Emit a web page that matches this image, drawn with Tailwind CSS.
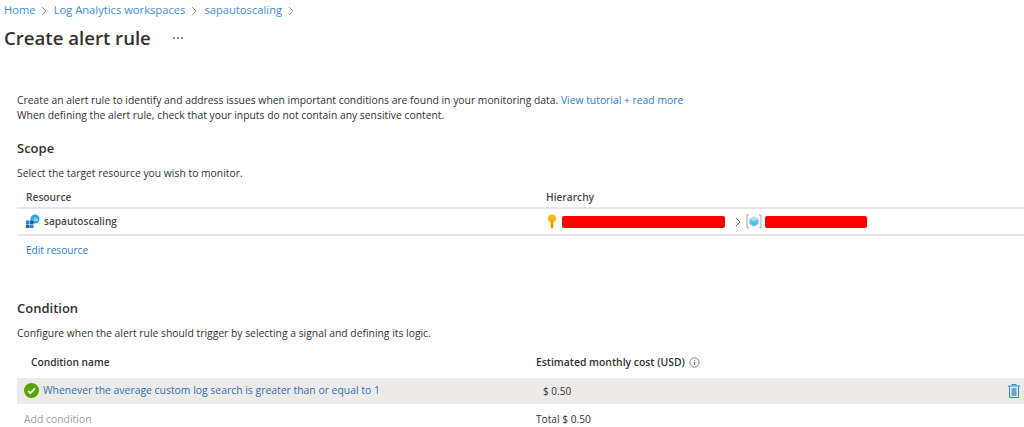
<!DOCTYPE html>
<html lang="en">
<head>
    <meta charset="UTF-8">
    <title>Create alert rule</title>
    <script src="https://cdn.jsdelivr.net/npm/@tailwindcss/browser@4"></script>
</head>
<body class="bg-white text-[#323130] font-['Open_Sans',sans-serif] text-[10.4px] w-[1024px] h-[427px] overflow-hidden">

    <!-- Breadcrumb -->
    <nav class="flex items-center h-[21px] pl-[4px] text-[11.2px] text-[#3f8ce0]">
        <span>Home</span>
        <svg class="w-[6px] h-[10px] ml-[5px] mr-[7px]" viewBox="0 0 6 10" fill="none" stroke="#a19f9d"><path d="M1 1l4 4-4 4"/></svg>
        <span>Log Analytics workspaces</span>
        <svg class="w-[6px] h-[10px] ml-[6px] mr-[7px]" viewBox="0 0 6 10" fill="none" stroke="#a19f9d"><path d="M1 1l4 4-4 4"/></svg>
        <span>sapautoscaling</span>
        <svg class="w-[6px] h-[10px] ml-[6px]" viewBox="0 0 6 10" fill="none" stroke="#a19f9d"><path d="M1 1l4 4-4 4"/></svg>
    </nav>

    <!-- Title -->
    <div class="flex items-center h-[34px] pl-[4px]">
        <h1 class="text-[18.6px] font-semibold leading-none">Create alert rule</h1>
        <span class="ml-[22px] flex gap-[2px]">
            <i class="w-[2px] h-[2px] bg-[#8a8886]"></i><i class="w-[2px] h-[2px] bg-[#8a8886]"></i><i class="w-[2px] h-[2px] bg-[#8a8886]"></i>
        </span>
    </div>

    <!-- Intro -->
    <div class="mt-[38px] pl-[17px] leading-[15px] text-[10.35px]">
        <p>Create an alert rule to identify and address issues when important conditions are found in your monitoring data. <span class="text-[#2b7cd3]">View tutorial + read more</span></p>
        <p>When defining the alert rule, check that your inputs do not contain any sensitive content.</p>
    </div>

    <!-- Scope -->
    <h2 class="mt-[15px] pl-[17px] text-[13px] font-semibold leading-[20px]">Scope</h2>
    <p class="mt-[8px] pl-[17px] leading-[15px] text-[10.35px]">Select the target resource you wish to monitor.</p>

    <div class="mt-[4px] pt-[3px] ml-[17px] flex h-[24px] items-center border-b-2 border-[#e6e6e6] font-semibold text-[#4a4a48]">
        <span class="w-[529px] pl-[9px] text-[10.2px]">Resource</span>
        <span class="text-[10.2px]">Hierarchy</span>
    </div>
    <div class="ml-[17px] flex h-[27px] items-center border-b-2 border-[#e6e6e6]">
        <div class="w-[529px] pl-[9px] flex items-center">
            <svg class="w-[14px] h-[14px] mr-[4px]" viewBox="0 0 14 14">
                <circle cx="9" cy="5" r="4.5" fill="#29a8df"/>
                <path d="M7 7V5.5M9 7V3.5M11 7V4.5" stroke="#fff" stroke-width="1"/>
                <rect x="0" y="6.5" width="3.5" height="3.5" fill="#2f80d0"/>
                <rect x="4" y="6.5" width="3.5" height="3.5" fill="#1d5fa8"/>
                <rect x="0" y="10.5" width="3.5" height="3.5" fill="#1d5fa8"/>
                <rect x="4" y="10.5" width="3.5" height="3.5" fill="#2f80d0"/>
            </svg>
            <span class="pt-[1px] font-semibold text-[10.1px] text-[#4a4a48]">sapautoscaling</span>
        </div>
        <div class="flex items-center">
            <svg class="w-[10px] h-[16px] ml-[1px] mr-[5px]" viewBox="0 0 10 16">
                <circle cx="5" cy="4.5" r="4" fill="#fcb714"/>
                <path d="M3.6 7h2.8v6L5 15l-1.4-2z" fill="#f09c00"/>
            </svg>
            <div class="w-[163px] h-[12px] bg-[#ff0000] rounded-[2px]"></div>
            <svg class="w-[6px] h-[10px] ml-[10px] mr-[5px]" viewBox="0 0 6 10" fill="none" stroke="#605e5c"><path d="M1 1l4 4-4 4"/></svg>
            <svg class="w-[16px] h-[15px] mr-[3px]" viewBox="0 0 16 15" fill="none">
                <path d="M3 1H1v13h2M13 1h2v13h-2" stroke="#a6a6a6"/>
                <path d="M8 2.5l4.5 2.5v5L8 12.5 3.5 10V5z" fill="#50c0ee"/>
                <path d="M8 7.5L3.5 5 8 2.5 12.5 5z" fill="#a5e4fa"/>
            </svg>
            <div class="mt-[1px] w-[102px] h-[12px] bg-[#ff0000] rounded-[2px]"></div>
        </div>
    </div>
    <p class="mt-[7px] pl-[26px] leading-[15px] text-[10.1px] text-[#2b7cd3]">Edit resource</p>

    <!-- Condition -->
    <h2 class="mt-[40px] pl-[17px] text-[13px] font-semibold leading-[20px]">Condition</h2>
    <p class="mt-[8px] pl-[17px] leading-[15px] text-[10.35px]">Configure when the alert rule should trigger by selecting a signal and defining its logic.</p>

    <div class="mt-[12px] mb-[5px] ml-[17px] flex h-[20px] items-center font-semibold">
        <span class="w-[519px] pl-[14px] text-[10.2px]">Condition name</span>
        <span class="flex items-center text-[10.4px]">Estimated monthly cost (USD)
            <svg class="w-[11px] h-[11px] ml-[4px]" viewBox="0 0 11 11" fill="none" stroke="#605e5c" stroke-width="0.8"><circle cx="5.5" cy="5.5" r="4.6"/><path d="M5.5 5v3M5.5 3v1"/></svg>
        </span>
    </div>
    <div class="ml-[17px] flex h-[26px] items-center bg-[#edebe9]">
        <div class="w-[519px] pl-[7px] flex items-center">
            <svg class="w-[15px] h-[15px] mr-[4px]" viewBox="0 0 15 15">
                <circle cx="7.5" cy="7.5" r="7.5" fill="#57a300"/>
                <path d="M4 7.8l2.4 2.4L11 5.4" fill="none" stroke="#fff" stroke-width="1.8"/>
            </svg>
            <span class="text-[#2f6fb3]">Whenever the average custom log search is greater than or equal to 1</span>
        </div>
        <span class="pl-[7px] text-[10px]">$ 0.50</span>
        <svg class="ml-auto mr-[4px] w-[12px] h-[14px]" viewBox="0 0 12 14" fill="none" stroke="#2b88d8">
            <path d="M0 2h12M4 2V.5h4V2M1.5 2v11.5h9V2"/>
            <path d="M3.5 4h5v8h-5z" fill="#2b88d8" fill-opacity="0.7" stroke="none"/>
        </svg>
    </div>
    <div class="ml-[17px] pt-[1px] flex h-[30px] items-center">
        <span class="w-[519px] pl-[7px] text-[#a19f9d]">Add condition</span>
        <span class="text-[10.2px]">Total $ 0.50</span>
    </div>
</body>
</html>
